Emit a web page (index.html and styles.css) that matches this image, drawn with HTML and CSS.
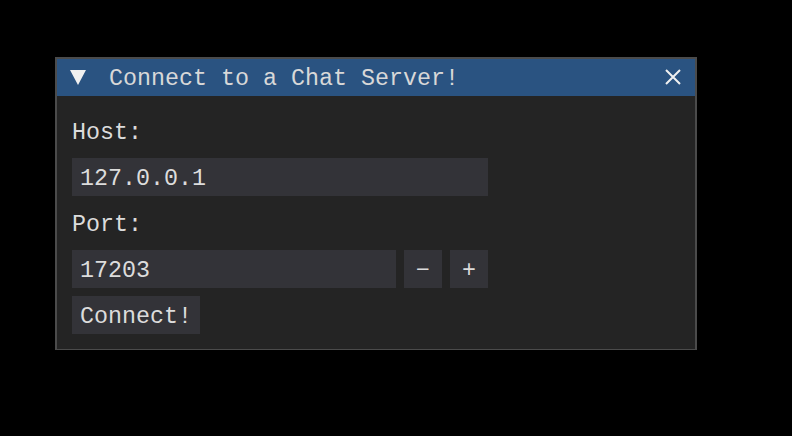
FILE: index.html
```html
<!DOCTYPE html>
<html>
<head>
<meta charset="utf-8">
<link rel="stylesheet" href="styles.css">
</head>
<body>
<div class="window">
  <div class="titlebar">
    <svg class="arrow" width="16" height="16" viewBox="0 0 16 16"><polygon points="0,1 16,1 8,16" fill="#f0f0f0"/></svg>
    <span class="title">Connect to a Chat Server!</span>
    <svg class="close" width="16" height="16" viewBox="0 0 16 16"><path d="M1 1 L15 15 M15 1 L1 15" stroke="#f0f0f0" stroke-width="2" fill="none"/></svg>
  </div>
  <div class="content">
    <div class="label">Host:</div>
    <div class="field host">127.0.0.1</div>
    <div class="label">Port:</div>
    <div class="row">
      <div class="field port">17203</div>
      <div class="btn square">−</div>
      <div class="btn square">+</div>
    </div>
    <div class="row">
      <div class="btn connect">Connect!</div>
    </div>
  </div>
</div>
</body>
</html>
```
FILE: styles.css
```css
html, body {
  margin: 0;
  padding: 0;
  background: #000;
}
body {
  font-family: "Liberation Mono", "DejaVu Sans Mono", monospace;
  font-size: 23.33px;
  color: #dcdcdc;
  padding-top: 58px;
  padding-left: 56px;
}
.window {
  width: 640px;
  height: 292px;
  background: #242424;
  outline: 2px solid #4b4b4b;
  outline-offset: -1px;
  display: flex;
  flex-direction: column;
}
.titlebar {
  height: 38px;
  background: #2a5381;
  display: flex;
  align-items: center;
  flex: none;
}
.arrow {
  margin-left: 14px;
  flex: none;
}
.title {
  margin-left: 23px;
  line-height: 26px;
  padding-top: 3px;
  color: #d8d8d8;
  flex: 1;
  white-space: pre;
}
.close {
  margin-right: 15px;
  flex: none;
}
.content {
  padding: 16px;
  display: flex;
  flex-direction: column;
  gap: 8px;
}
.label {
  height: 38px;
  box-sizing: border-box;
  padding-top: 8px;
  line-height: 26px;
}
.field, .btn {
  height: 38px;
  box-sizing: border-box;
  background: #333338;
  padding: 8px 8px 4px;
  line-height: 26px;
  white-space: pre;
}
.host { width: 416px; }
.port { width: 324px; }
.row {
  display: flex;
  gap: 8px;
}
.square {
  width: 38px;
  padding: 8px 0 4px;
  text-align: center;
}
.connect {
  width: 128px;
}
```
